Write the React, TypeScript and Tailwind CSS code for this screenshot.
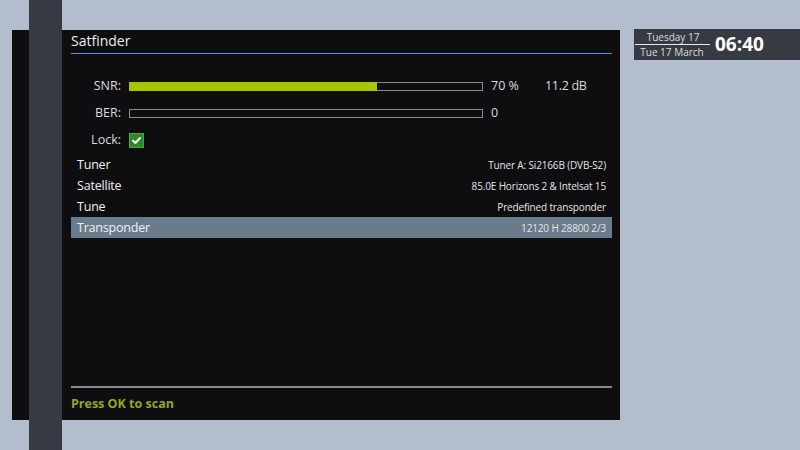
import React from "react";

type Row = {
   label: string;
   value: string;
   selected?: boolean;
};

const rows: Row[] = [
   { label: "Tuner", value: "Tuner A: Si2166B (DVB-S2)" },
   { label: "Satellite", value: "85.0E Horizons 2 & Intelsat 15" },
   { label: "Tune", value: "Predefined transponder" },
   { label: "Transponder", value: "12120 H 28800 2/3", selected: true },
];

const font = { fontFamily: '"Open Sans", "Noto Sans", sans-serif' };

const Meter: React.FC<{ label: string; percent: number; value: string; extra?: string }> = ({
   label,
   percent,
   value,
   extra,
}) => (
   <div className="flex items-center h-[27px]">
      <span className="w-[50px] text-right text-[12.5px] text-[#dcdcdc]">{label}</span>
      <div className="ml-[8px] w-[354px] h-[9px] border border-[#8c8c8c] bg-[#0e0d10]">
         <div className="bg-[#a6c600] -mt-px -ml-px" style={{ width: percent * 3.54, height: 9 }} />
      </div>
      <span className="ml-[8px] w-[54px] text-[12.5px] text-[#dcdcdc]">{value}</span>
      {extra && <span className="text-[12.5px] tracking-[-0.3px] text-[#dcdcdc]">{extra}</span>}
   </div>
);

export default function App() {
   return (
      <div className="relative w-[800px] h-[450px] overflow-hidden bg-[#b3bdce] flex items-start" style={font}>
         {/* main window */}
         <div className="ml-[12px] mt-[30px] w-[608px] h-[390px] bg-[#0e0d10] flex flex-col pl-[59px] pr-[8px]">
            <div className="h-[23px] leading-[22px] text-[14px] text-[#ececec]">Satfinder</div>
            <div className="h-px bg-[#5b8fd8]" />

            <div className="mt-[19px]">
               <Meter label="SNR:" percent={70} value="70 %" extra="11.2 dB" />
               <Meter label="BER:" percent={0} value="0" />
               <div className="flex items-center h-[27px]">
                  <span className="w-[50px] text-right text-[12.5px] text-[#dcdcdc]">Lock:</span>
                  <div className="ml-[8px] w-[15px] h-[15px] bg-[#2a8a2a] border border-[#4aa84a] flex items-center justify-center">
                     <svg width="11" height="11" viewBox="0 0 11 11">
                        <path d="M2 5.6 L4.4 8 L9 3" fill="none" stroke="#ffffff" strokeWidth="2" strokeLinecap="round" strokeLinejoin="round" />
                     </svg>
                  </div>
               </div>
            </div>

            <div>
               {rows.map((r) => (
                  <div
                     key={r.label}
                     className={`flex items-center justify-between h-[21px] pt-[2px] px-[6px] ${r.selected ? "bg-[#6a7b8c]" : ""}`}
                  >
                     <span className="text-[12.5px] tracking-[-0.2px] text-[#f0f0f0]">{r.label}</span>
                     <span className="text-[10px] tracking-[-0.15px] text-[#e6e6e6]">{r.value}</span>
                  </div>
               ))}
            </div>

            <div className="mt-auto h-[2px] bg-[#8a8a8a]" />
            <div className="h-[30px] leading-[31px] text-[12.5px] font-bold text-[#8fa924] mb-[2px]">Press OK to scan</div>
         </div>

         {/* clock */}
         <div className="ml-[14px] mt-[29px] w-[166px] h-[31px] bg-[#363a43] flex items-center">
            <div className="w-[76px] flex flex-col items-stretch">
               <span className="text-center text-[10px] leading-[13px] text-[#dedede] pl-[2px]">Tuesday 17</span>
               <div className="h-px bg-[#e8e8e8] ml-[1px]" />
               <span className="text-center text-[10px] leading-[14px] text-[#dedede]">Tue 17 March</span>
            </div>
            <span className="ml-[5px] text-[19px] font-bold text-white leading-none">06:40</span>
         </div>

         {/* vertical strip overlay */}
         <div className="absolute left-[29px] top-0 w-[33px] h-[450px] bg-[#363a43]" />
      </div>
   );
}
